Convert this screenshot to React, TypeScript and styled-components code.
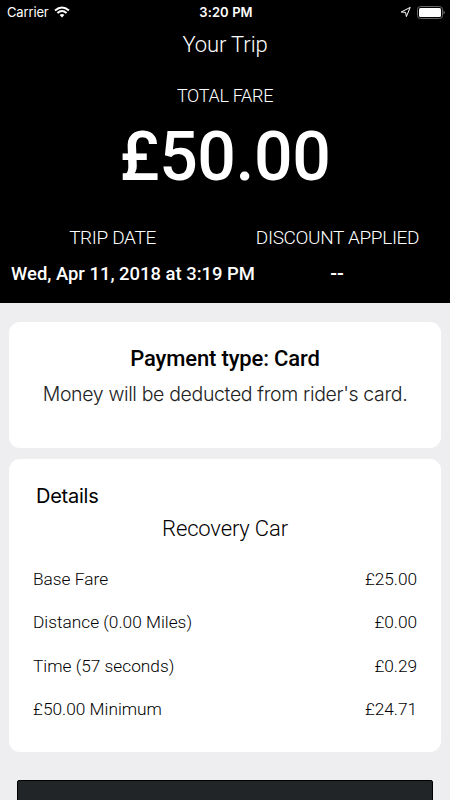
import React from "react";
import styled, { createGlobalStyle } from "styled-components";

const Global = createGlobalStyle`
  * { box-sizing: border-box; }
  body { margin: 0; background: #eeeef0; font-family: Roboto, sans-serif; }
`;
const Screen = styled.main`
  width: 450px; height: 800px; overflow: hidden; background: #eeeef0;
  display: flex; flex-direction: column;
`;
const Header = styled.header`
  height: 303px; flex: none; background: #000; color: #fff;
  display: flex; flex-direction: column;
`;
const StatusBar = styled.div`
  height: 24px; padding: 0 5px 0 7px; flex: none;
  display: grid; grid-template-columns: 1fr auto 1fr; align-items: center;
  font: 400 13px/24px Inter, sans-serif;
`;
const Side = styled.div<{ $end?: boolean }>`
  display: flex; align-items: center; gap: 5.5px; letter-spacing: -0.15px;
  justify-content: ${(p) => (p.$end ? "flex-end" : "flex-start")};
`;
const Clock = styled.span`font-weight: 600; letter-spacing: 0.1px;`;
const Line = styled.div<{ $size: number; $h: number; $weight?: number; $ls?: number }>`
  font-size: ${(p) => p.$size}px; line-height: ${(p) => p.$h}px; height: ${(p) => p.$h}px;
  font-weight: ${(p) => p.$weight ?? 300}; letter-spacing: ${(p) => p.$ls ?? 0}px;
  text-align: center; white-space: nowrap; flex: none;
`;
const Labels = styled.div`
  display: grid; grid-template-columns: 225px 225px; margin-top: 22px;
`;
const Values = styled.div`
  display: grid; grid-template-columns: 244px 164px; padding-left: 11px;
`;
const Body = styled.div`
  padding: 19px 9px 0; display: flex; flex-direction: column;
`;
const Card = styled.section<{ $h: number }>`
  height: ${(p) => p.$h}px; flex: none; background: #fff; border-radius: 11px;
  margin-bottom: 11px; color: #000;
`;
const Note = styled.p`
  margin: -14px 0 0; text-align: center; white-space: nowrap; color: #222;
  font: 300 19.5px/24px Inter, sans-serif; letter-spacing: -0.35px;
`;
const Heading = styled.h2`
  margin: 0; padding: 24px 27px 0; font: 400 20px/26px Inter, sans-serif;
  letter-spacing: -0.25px;
`;
const Rows = styled.div`padding-top: 8px;`;
const Row = styled.div`
  display: flex; justify-content: space-between; align-items: center;
  height: 43.5px; padding: 0 24px; font-size: 17.3px; font-weight: 300;
`;
const Amount = styled.span`letter-spacing: -0.05px;`;
const Action = styled.div`
  height: 40px; margin: 17px 8px 0; background: #212528; border: 1px solid #000; border-radius: 2px;
`;
const rows = [
  ["Base Fare", "£25.00"],
  ["Distance (0.00 Miles)", "£0.00"],
  ["Time (57 seconds)", "£0.29"],
  ["£50.00 Minimum", "£24.71"],
];

export default function App() {
  return (
    <Screen>
      <Global />
      <Header>
        <StatusBar>
          <Side>Carrier
            <svg width="16" height="12" viewBox="0 0 16 12" fill="none" stroke="#fff" strokeWidth="2">
              <path d="M1 4.5Q8-1.5 15 4.5M3.4 7Q8 3 12.6 7" /><path d="M5.6 9Q8 7 10.4 9L8 11.5Z" fill="#fff" stroke="none" />
            </svg>
          </Side>
          <Clock>3:20 PM</Clock>
          <Side $end>
            <svg width="12" height="12" viewBox="0 0 12 12" fill="none" stroke="#fff"><path d="M1.2 6 10.2 1.4 6.4 10.6 5.6 6.4Z" /></svg>
            <svg width="28" height="13" viewBox="0 0 28 13"><rect x=".5" y=".5" width="25" height="12" rx="3" fill="none" stroke="#666" /><rect x="2" y="2" width="22" height="9" rx="1.5" fill="#fff" /><path d="M26.5 4.5v4q1.2-.5 1.2-2t-1.2-2" fill="#777" /></svg>
          </Side>
        </StatusBar>
        <Line $size={22} $h={42} $ls={-0.1}>Your Trip</Line>
        <Line $size={18} $h={60} $ls={-0.3}>TOTAL FARE</Line>
        <Line $size={68} $h={62} $weight={500} $ls={-0.45}>£50.00</Line>
        <Labels>
          <Line $size={19} $h={56} $ls={-0.35}>TRIP DATE</Line>
          <Line $size={19} $h={56} $ls={-0.35}>DISCOUNT APPLIED</Line>
        </Labels>
        <Values>
          <Line $size={18.43} $h={16} $weight={500}>Wed, Apr 11, 2018 at 3:19 PM</Line>
          <Line $size={20} $h={14} $weight={500}>--</Line>
        </Values>
      </Header>
      <Body>
        <Card $h={126}>
          <Line $size={22} $h={74} $weight={500} $ls={-0.15}>Payment type: Card</Line>
          <Note>Money will be deducted from rider's card.</Note>
        </Card>
        <Card $h={293}>
          <Heading>Details</Heading>
          <Line $size={22} $h={40} $ls={-0.15}>Recovery Car</Line>
          <Rows>
            {rows.map(([label, value]) => <Row key={label}><span>{label}</span><Amount>{value}</Amount></Row>)}
          </Rows>
        </Card>
        <Action />
      </Body>
    </Screen>
  );
}
